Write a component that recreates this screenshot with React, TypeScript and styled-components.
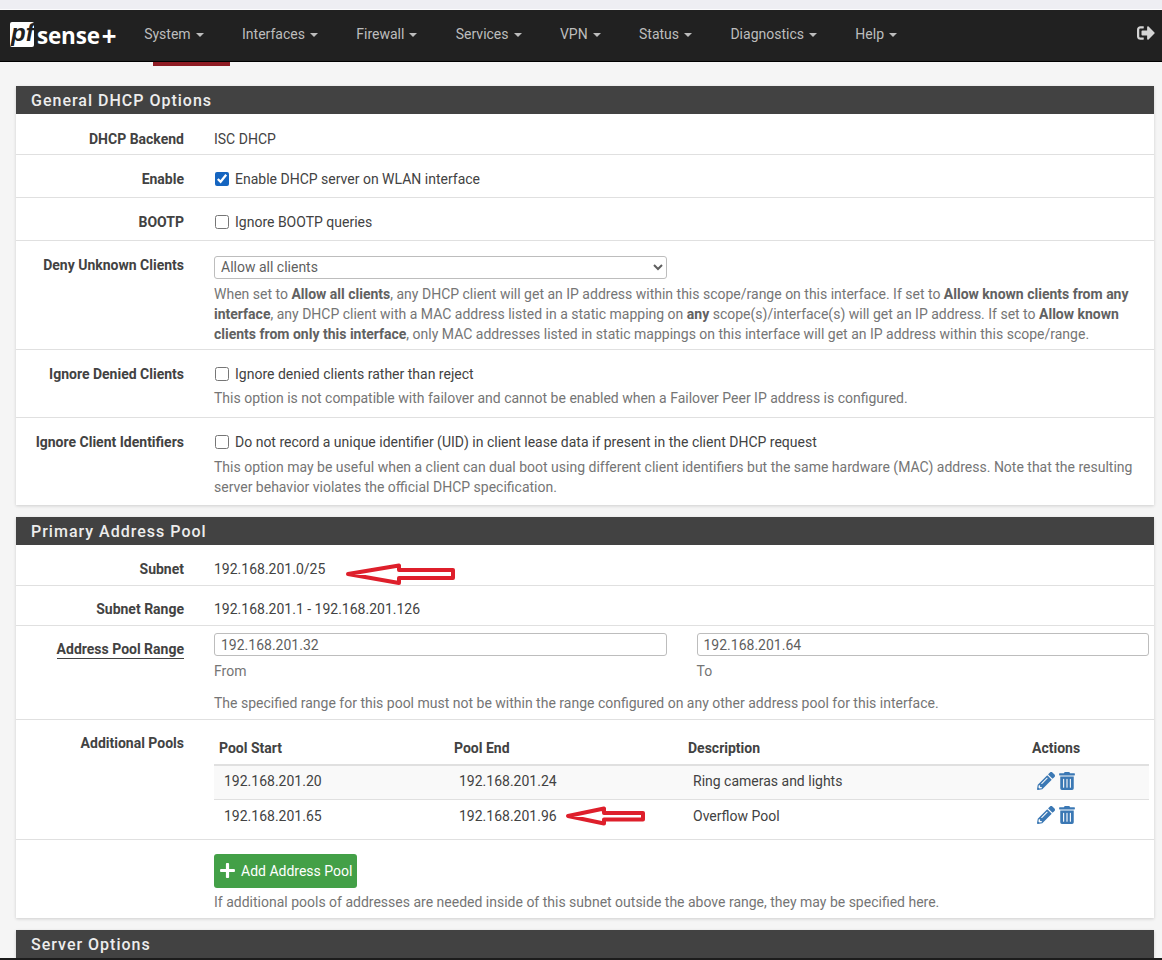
import type { ReactNode } from "react";
import { FaPencilAlt, FaPlus, FaSignOutAlt, FaTrashAlt } from "react-icons/fa";
import styled, { createGlobalStyle } from "styled-components";

const GlobalStyle = createGlobalStyle`
  html, body {
    margin: 0;
    height: 960px;
    overflow: hidden;
    background: #f5f5f5;
    font-family: Roboto, "Liberation Sans", sans-serif;
    font-size: 14px;
    line-height: 20px;
    color: #424242;
  }
  * { box-sizing: border-box; }
`;

const TopStrip = styled.div`
  height: 10px;
  background: #eeeef3;
  border-bottom: 1px solid #fbfbfd;
`;

const Navbar = styled.nav`
  display: flex;
  align-items: center;
  height: 52px;
  padding: 0 7px 0 10px;
  background: #212121;
  border-bottom: 1px solid #000;
`;

const Logo = styled.div`
  display: flex;
  align-items: center;
  width: 115px;
  color: #fff;
`;

const LogoBox = styled.span`
  display: block;
  width: 24px;
  height: 25px;
  margin-top: -2px;
  padding-left: 1px;
  background: #fff;
  border-radius: 2px;
  color: #212121;
  font: italic 700 24px/21px "Liberation Sans", sans-serif;
`;

const LogoWord = styled.span`
  margin-left: 3px;
  font: 700 22.5px/24px "Open Sans", sans-serif;
  letter-spacing: -0.2px;
`;

const LogoPlus = styled.span`
  margin-left: 2px;
  font: 700 25px/24px "Liberation Sans", sans-serif;
`;

const NavItem = styled.div<{ $active?: boolean }>`
  position: relative;
  display: flex;
  align-items: center;
  gap: 5px;
  height: 100%;
  padding: 0 19.2px 3px;
  color: #bdbdbd;
  font-size: 14px;

  &::after {
    content: "";
    display: ${({ $active }) => ($active ? "block" : "none")};
    position: absolute;
    left: 28px;
    right: -7px;
    bottom: -5px;
    height: 4px;
    background: #8f1c24;
  }
`;

const Caret = styled.i`
  width: 0;
  height: 0;
  margin-top: 1px;
  border-left: 4px solid transparent;
  border-right: 4px solid transparent;
  border-top: 4px solid #bdbdbd;
`;

const NavRight = styled.div`
  display: flex;
  margin-left: auto;
  padding-bottom: 5px;
  color: #d4d4d4;
  font-size: 18px;
`;

const Main = styled.main`
  display: flex;
  flex-direction: column;
  gap: 12px;
  padding: 24px 8px 0 16px;
`;

const Panel = styled.section`
  background: #fff;
  box-shadow: 0 1px 3px rgba(0, 0, 0, 0.16);
`;

const PanelHeading = styled.h2`
  height: 28px;
  margin: 0;
  padding: 0 15px;
  background: #424242;
  color: #ededed;
  font-size: 16px;
  font-weight: 500;
  line-height: 29px;
  letter-spacing: 1px;
`;

const Row = styled.div<{ $last?: boolean }>`
  display: grid;
  grid-template-columns: 183px 1fr;
  border-bottom: ${({ $last }) => ($last ? "none" : "1px solid #e0e0e0")};
`;

const LabelCell = styled.div<{ $top: number }>`
  padding: ${({ $top }) => $top}px 15px 0 0;
  text-align: right;
  font-weight: 700;
`;

const UnderlinedLabel = styled.span`
  border-bottom: 1px solid #424242;
  padding-bottom: 1px;
`;

const Field = styled.div<{ $top: number; $bottom: number }>`
  padding: ${({ $top }) => $top}px 5px ${({ $bottom }) => $bottom}px 15px;
`;

const CheckLine = styled.label`
  display: flex;
  align-items: center;
  gap: 6px;
`;

const CheckBox = styled.input.attrs({ type: "checkbox" })`
  width: 14px;
  height: 14px;
  margin: 0 0 0 1px;
  accent-color: #1565c0;
`;

const Help = styled.div<{ $gap?: number }>`
  margin-top: ${({ $gap }) => $gap ?? 4}px;
  color: #757575;
  strong { font-weight: 700; color: #616161; }
`;

const Select = styled.select`
  display: block;
  width: 453px;
  height: 23px;
  padding: 0 2px 2px;
  background: #fff;
  border: 1px solid #bdbdbd;
  border-radius: 3px;
  color: #5f5f5f;
  font: inherit;
`;

const TextInput = styled.input`
  display: block;
  width: 100%;
  height: 23px;
  padding: 0 6px;
  border: 1px solid #bdbdbd;
  border-radius: 3px;
  color: #5f5f5f;
  font: inherit;
`;

const RangeGrid = styled.div`
  display: grid;
  grid-template-columns: 1fr 1fr;
  column-gap: 30px;
`;

const Hint = styled.div`
  margin-top: 5px;
  color: #757575;
`;

const PoolTable = styled.table`
  width: 100%;
  border-collapse: collapse;
  table-layout: fixed;
`;

const Th = styled.th<{ $width?: number }>`
  width: ${({ $width }) => ($width ? `${$width}px` : "auto")};
  height: 33px;
  padding: 0 5px;
  border-bottom: 2px solid #e0e0e0;
  text-align: left;
  font-weight: 700;
`;

const Tr = styled.tr<{ $striped?: boolean }>`
  background: ${({ $striped }) => ($striped ? "#f9f9f9" : "#fff")};
`;

const Td = styled.td<{ $bordered?: boolean }>`
  height: ${({ $bordered }) => ($bordered ? 34 : 33)}px;
  padding: 0 10px ${({ $bordered }) => ($bordered ? 2 : 0)}px;
  border-bottom: ${({ $bordered }) => ($bordered ? "1px solid #e0e0e0" : "none")};
`;

const ActionCell = styled(Td)`
  padding: 1px 0 0 10px;
  color: #3b78b4;
  font-size: 18px;
  line-height: 18px;
  white-space: nowrap;
  svg { margin-right: 3px; }
`;

const AddButton = styled.button`
  display: inline-flex;
  align-items: center;
  gap: 5px;
  height: 34px;
  padding: 0 5px 1px;
  background: #43a047;
  border: 0;
  border-radius: 3px;
  color: #fff;
  font: inherit;
  svg { font-size: 17px; }
`;

const Page = styled.div`
  position: relative;
  height: 960px;
  overflow: hidden;
  border-bottom: 2px solid #1c1c1c;
`;

const Arrow = styled.svg<{ $left: number; $top: number }>`
  position: absolute;
  left: ${({ $left }) => $left}px;
  top: ${({ $top }) => $top}px;
`;

const NAV_ITEMS = [
  "System",
  "Interfaces",
  "Firewall",
  "Services",
  "VPN",
  "Status",
  "Diagnostics",
  "Help",
];

const OptionRow = ({
  label,
  last,
  labelTop = 14,
  top = 14,
  bottom = 6,
  children,
}: {
  label: ReactNode;
  last?: boolean;
  labelTop?: number;
  top?: number;
  bottom?: number;
  children: ReactNode;
}) => (
  <Row $last={last}>
    <LabelCell $top={labelTop}>{label}</LabelCell>
    <Field $top={top} $bottom={bottom}>
      {children}
    </Field>
  </Row>
);

const Actions = () => (
  <>
    <FaPencilAlt />
    <FaTrashAlt />
  </>
);

export default function App() {
  return (
    <Page>
      <GlobalStyle />
      <TopStrip />
      <Navbar>
        <Logo>
          <LogoBox>pf</LogoBox>
          <LogoWord>sense</LogoWord>
          <LogoPlus>+</LogoPlus>
        </Logo>
        {NAV_ITEMS.map((item) => (
          <NavItem key={item} $active={item === "System"}>
            {item}
            <Caret />
          </NavItem>
        ))}
        <NavRight>
          <FaSignOutAlt />
        </NavRight>
      </Navbar>

      <Main>
        <Panel>
          <PanelHeading>General DHCP Options</PanelHeading>
          <OptionRow label="DHCP Backend" labelTop={15} top={15} bottom={5}>
            ISC DHCP
          </OptionRow>
          <OptionRow label="Enable" bottom={8}>
            <CheckLine>
              <CheckBox defaultChecked />
              Enable DHCP server on WLAN interface
            </CheckLine>
          </OptionRow>
          <OptionRow label="BOOTP" bottom={8}>
            <CheckLine>
              <CheckBox />
              Ignore BOOTP queries
            </CheckLine>
          </OptionRow>
          <OptionRow label="Deny Unknown Clients" top={15} bottom={5}>
            <Select defaultValue="all">
              <option value="all">Allow all clients</option>
            </Select>
            <Help $gap={5}>
              When set to <strong>Allow all clients</strong>, any DHCP client will get an IP
              address within this scope/range on this interface. If set to{" "}
              <strong>Allow known clients from any interface</strong>, any DHCP client with a MAC
              address listed in a static mapping on <strong>any</strong> scope(s)/interface(s) will
              get an IP address. If set to{" "}
              <strong>Allow known clients from only this interface</strong>, only MAC addresses
              listed in static mappings on this interface will get an IP address within this
              scope/range.
            </Help>
          </OptionRow>
          <OptionRow label="Ignore Denied Clients" bottom={9}>
            <CheckLine>
              <CheckBox />
              Ignore denied clients rather than reject
            </CheckLine>
            <Help>
              This option is not compatible with failover and cannot be enabled when a Failover
              Peer IP address is configured.
            </Help>
          </OptionRow>
          <OptionRow label="Ignore Client Identifiers" bottom={8} last>
            <CheckLine>
              <CheckBox />
              Do not record a unique identifier (UID) in client lease data if present in the client
              DHCP request
            </CheckLine>
            <Help $gap={5}>
              This option may be useful when a client can dual boot using different client
              identifiers but the same hardware (MAC) address. Note that the resulting server
              behavior violates the official DHCP specification.
            </Help>
          </OptionRow>
        </Panel>

        <Panel>
          <PanelHeading>Primary Address Pool</PanelHeading>
          <OptionRow label="Subnet">192.168.201.0/25</OptionRow>
          <OptionRow label="Subnet Range" labelTop={13} top={13}>
            192.168.201.1 - 192.168.201.126
          </OptionRow>
          <OptionRow
            label={<UnderlinedLabel>Address Pool Range</UnderlinedLabel>}
            labelTop={13}
            top={7}
          >
            <RangeGrid>
              <div>
                <TextInput defaultValue="192.168.201.32" />
                <Hint>From</Hint>
              </div>
              <div>
                <TextInput defaultValue="192.168.201.64" />
                <Hint>To</Hint>
              </div>
            </RangeGrid>
            <Help $gap={12}>
              The specified range for this pool must not be within the range configured on any
              other address pool for this interface.
            </Help>
          </OptionRow>
          <OptionRow label="Additional Pools" labelTop={13} top={12} bottom={7}>
            <PoolTable>
              <thead>
                <tr>
                  <Th $width={235}>Pool Start</Th>
                  <Th $width={234}>Pool End</Th>
                  <Th $width={344}>Description</Th>
                  <Th>Actions</Th>
                </tr>
              </thead>
              <tbody>
                <Tr $striped>
                  <Td $bordered>192.168.201.20</Td>
                  <Td $bordered>192.168.201.24</Td>
                  <Td $bordered>Ring cameras and lights</Td>
                  <ActionCell $bordered>
                    <Actions />
                  </ActionCell>
                </Tr>
                <Tr>
                  <Td>192.168.201.65</Td>
                  <Td>192.168.201.96</Td>
                  <Td>Overflow Pool</Td>
                  <ActionCell>
                    <Actions />
                  </ActionCell>
                </Tr>
              </tbody>
            </PoolTable>
          </OptionRow>
          <OptionRow label="" last>
            <AddButton>
              <FaPlus />
              Add Address Pool
            </AddButton>
            <Help>
              If additional pools of addresses are needed inside of this subnet outside the above
              range, they may be specified here.
            </Help>
          </OptionRow>
        </Panel>

        <Panel>
          <PanelHeading>Server Options</PanelHeading>
        </Panel>
      </Main>

      <Arrow $left={344} $top={561} width="114" height="26" viewBox="0 0 114 26">
        <path
          d="M4 13 L55 4.5 L55 9 L109 9 L109 17 L55 17 L55 22 Z"
          fill="#fff"
          stroke="#de1f2b"
          strokeWidth="4"
          strokeLinejoin="round"
        />
      </Arrow>
      <Arrow $left={564} $top={804} width="83" height="24" viewBox="0 0 83 24">
        <path
          d="M4 12 L40 4.5 L40 9 L79 9 L79 15.5 L40 15.5 L40 19.5 Z"
          fill="#fff"
          stroke="#de1f2b"
          strokeWidth="4"
          strokeLinejoin="round"
        />
      </Arrow>
    </Page>
  );
}
